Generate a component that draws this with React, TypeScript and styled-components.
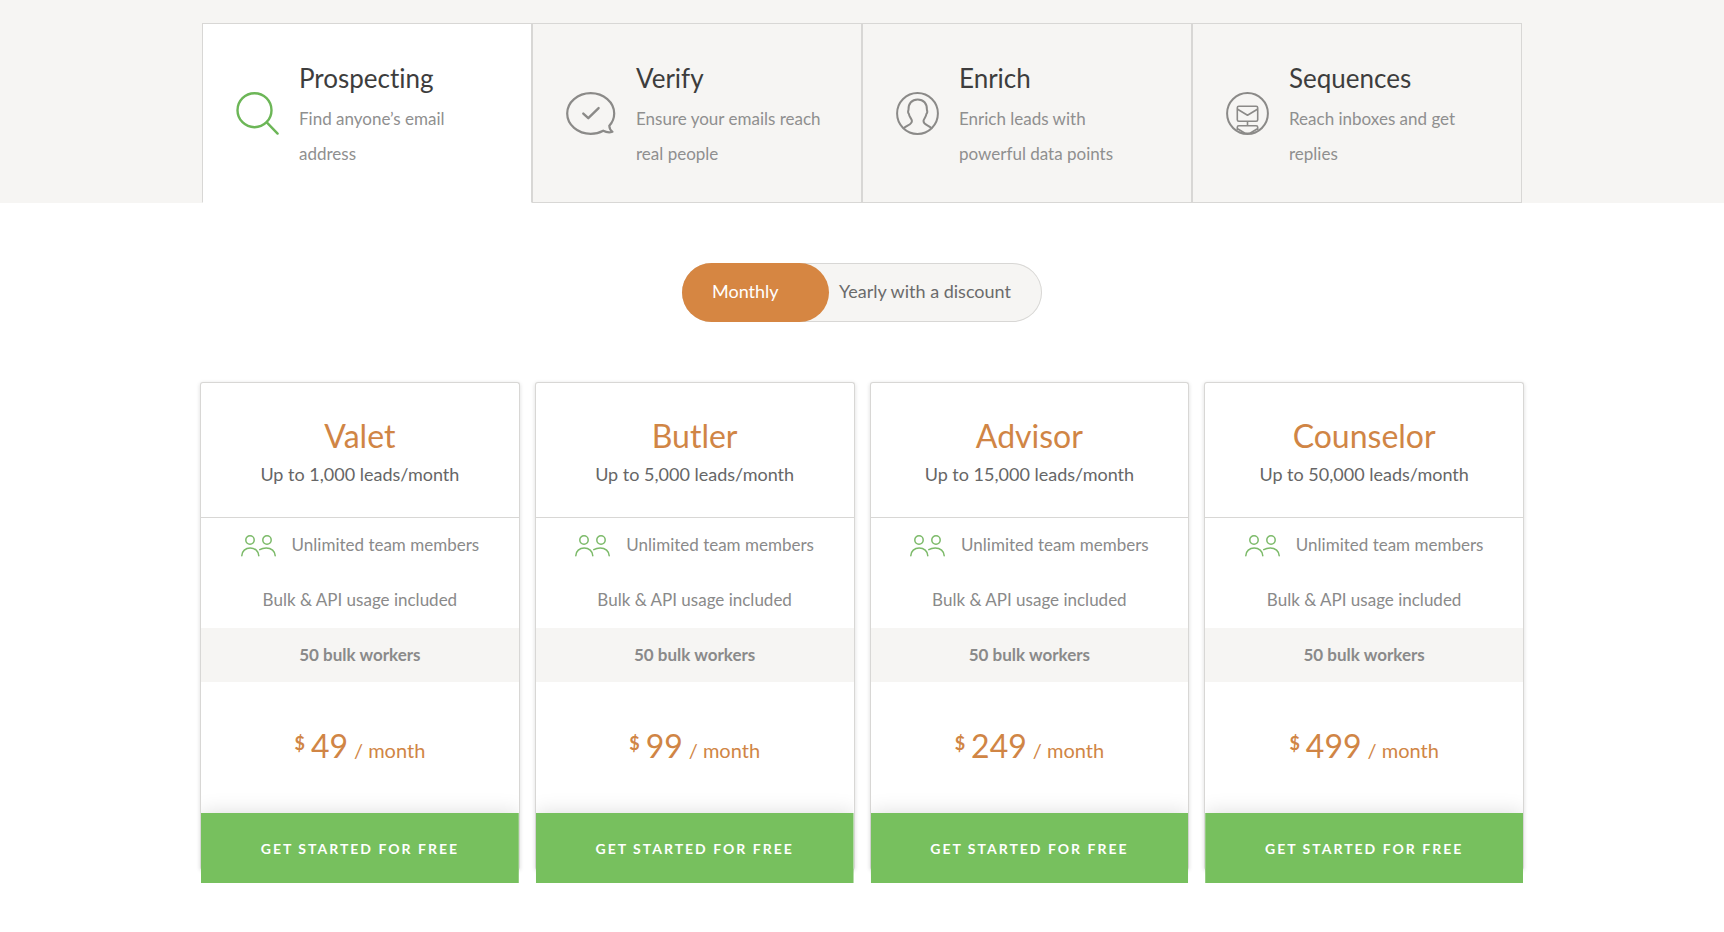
import React, { useState } from "react";
import styled, { createGlobalStyle } from "styled-components";

const GlobalStyle = createGlobalStyle`
  *, *::before, *::after { box-sizing: border-box; }
  body {
    margin: 0;
    background: #fff;
    color: #8a8a8a;
    font-family: Lato, "Liberation Sans", sans-serif;
    font-size: 17px;
    font-variant-ligatures: none;
  }
  button, input { font: inherit; font-variant-ligatures: inherit; }
`;

const TabBand = styled.header`
  padding: 23px 24px 0;
  background: #f6f5f3;
`;

const Tabs = styled.div`
  display: grid;
  grid-template-columns: repeat(4, minmax(0, 1fr));
  max-width: 1320px;
  margin: 0 auto;
`;

const Tab = styled.button<{ $active: boolean }>`
  display: flex;
  align-items: center;
  gap: 20px;
  min-height: 180px;
  padding: 30px 38px 30px 33px;
  border: 1px solid #d8d7d5;
  border-bottom-color: ${(p) => (p.$active ? "#fff" : "#d8d7d5")};
  background: ${(p) => (p.$active ? "#fff" : "#f6f5f3")};
  color: ${(p) => (p.$active ? "#6cb657" : "#8b8a88")};
  text-align: left;
  cursor: pointer;

  svg { flex: none; }
`;

const TabText = styled.span`
  display: block;
`;

const TabTitle = styled.span`
  display: block;
  color: #3d3d3d;
  font-size: 26px;
  line-height: 46px;
`;

const TabNote = styled.span`
  display: block;
  color: #8f8f8f;
  line-height: 35px;
`;

const Main = styled.main`
  display: flex;
  flex-direction: column;
  align-items: center;
  padding: 60px 24px 62px;
`;

const Toggle = styled.div`
  display: flex;
  width: 360px;
  height: 59px;
  border-radius: 30px;
  background: #f6f5f3;
  box-shadow: inset 0 0 0 1px #d8d7d5;
`;

const ToggleOption = styled.label<{ $wide?: boolean }>`
  display: flex;
  align-items: center;
  flex: ${(p) => (p.$wide ? "1" : "0 0 147px")};
  padding: 0 0 4px ${(p) => (p.$wide ? "10px" : "30px")};
  border-radius: 30px;
  color: #6b6b6b;
  font-size: 18px;
  white-space: nowrap;
  cursor: pointer;

  &:has(input:checked) {
    background: #d68642;
    color: #fff;
  }
`;

const ToggleInput = styled.input`
  appearance: none;
  width: 0;
  height: 0;
  margin: 0;
`;

const Plans = styled.section`
  display: grid;
  grid-template-columns: repeat(4, minmax(0, 1fr));
  gap: 15px;
  width: 100%;
  max-width: 1324px;
  margin-top: 60px;
`;

const Card = styled.article`
  display: flex;
  flex-direction: column;
  border: 1px solid #d8d7d5;
  border-bottom: 0;
  border-radius: 3px;
  background: #fff;
  box-shadow: 0 1px 4px rgba(0, 0, 0, 0.14);
  text-align: center;
`;

const CardHead = styled.div`
  height: 135px;
  padding-top: 32px;
  border-bottom: 1px solid #d8d7d5;
`;

const PlanName = styled.h2`
  margin: 0;
  color: #d08545;
  font-size: 32px;
  font-weight: 400;
  line-height: 42px;
`;

const PlanLeads = styled.p`
  margin: 0;
  color: #666;
  font-size: 18px;
  line-height: 34px;
`;

const Features = styled.ul`
  margin: 0;
  padding: 0;
  list-style: none;
`;

const Feature = styled.li<{ $strong?: boolean }>`
  display: flex;
  align-items: center;
  justify-content: center;
  gap: 16px;
  height: ${(p) => (p.$strong ? "54px" : "55px")};
  padding-bottom: 2px;
  background: ${(p) => (p.$strong ? "#f6f5f3" : "transparent")};
  font-weight: ${(p) => (p.$strong ? 700 : 400)};

  svg { flex: none; margin-top: 2px; }
`;

const Price = styled.p`
  display: flex;
  align-items: baseline;
  justify-content: center;
  gap: 6px;
  height: 131px;
  margin: 0;
  color: #d08545;
  font-size: 20px;
  line-height: 128px;
`;

const Currency = styled.sup`
  align-self: center;
  padding-bottom: 10px;
  font-size: 18px;
  font-weight: 700;
  line-height: 1;
`;

const Amount = styled.span`
  font-size: 32px;
`;

const StartButton = styled.button`
  height: 70px;
  margin-bottom: -13px;
  border: 0;
  background: #77c05e;
  box-shadow: 0 0 20px rgba(0, 0, 0, 0.14);
  clip-path: inset(-30px 0 0 0);
  color: #fff;
  font-size: 14px;
  font-weight: 700;
  letter-spacing: 2px;
  text-transform: uppercase;
  cursor: pointer;
`;

const SearchIcon = () => (
  <svg width="43" height="43" viewBox="0 0 43 43" fill="none" stroke="currentColor" strokeWidth="2.4" strokeLinecap="round" aria-hidden="true">
    <circle cx="18.5" cy="18.2" r="17" />
    <path d="M31 30.6 41.6 41.6" />
  </svg>
);

const VerifyIcon = () => (
  <svg width="50" height="43" viewBox="0 0 50 43" fill="none" stroke="currentColor" strokeWidth="2.2" strokeLinecap="round" strokeLinejoin="round" aria-hidden="true">
    <path d="M43.3 33.8C46.5 30.3 48.2 26 48.2 21.5 48.2 10.2 37.7 1.2 24.7 1.2S1.2 10.2 1.2 21.5 11.7 41.8 24.7 41.8C29.3 41.8 33.6 40.7 37.2 38.7 40 40.2 43.3 40.7 46.5 39.8 44.7 38.6 43.4 36.3 43.3 33.8Z" />
    <path d="M17.3 21.6 22.3 26.2 32.6 16.1" strokeWidth="2.4" />
  </svg>
);

const EnrichIcon = () => (
  <svg width="43" height="43" viewBox="0 0 43 43" fill="none" stroke="currentColor" strokeWidth="2" strokeLinejoin="round" aria-hidden="true">
    <circle cx="21.5" cy="21.5" r="20.4" />
    <path d="M7.5 36.2C12 32.6 16.2 32.4 15.9 28.8 15.7 26.7 13.3 25.3 12.8 21.7 11.5 20.6 12.1 18.8 12.5 17.6 12.3 11.6 15.8 7.4 21.7 7.4S31.1 11.6 30.9 17.6C31.3 18.8 31.8 20.6 30.5 21.7 30 25.3 27.7 26.7 27.5 28.8 27.2 32.4 31.2 32.6 35.7 36.2" />
  </svg>
);

const SequencesIcon = () => (
  <svg width="43" height="43" viewBox="0 0 43 43" fill="none" stroke="currentColor" strokeWidth="1.6" strokeLinejoin="round" aria-hidden="true">
    <circle cx="21.5" cy="21.5" r="20.4" strokeWidth="2" />
    <rect x="11.3" y="14.3" width="20.4" height="14.9" rx="1.5" />
    <path d="M11.6 17.3 21.5 23.3 31.4 17.3M21.5 29.2V33.8M11.3 38V35.3Q11.3 33.8 12.8 33.8H30.2Q31.7 33.8 31.7 35.3V38M11.6 36.8 19 41.2H24L31.4 36.8" />
  </svg>
);

const TeamIcon = () => (
  <svg width="35" height="22" viewBox="0 0 35 22" fill="none" stroke="#7cba69" strokeWidth="1.5" strokeLinecap="round" aria-hidden="true">
    <circle cx="9" cy="5" r="4.2" />
    <circle cx="26" cy="5" r="4.2" />
    <path d="M.8 20.8C.8 16.2 4.6 12.9 9.2 12.9S17.8 16.2 17.8 20.8M18.8 14.7C20.6 13.5 23 12.9 25.2 12.9 30.2 12.9 34.2 16.2 34.2 20.8" />
  </svg>
);

const products = [
  { title: "Prospecting", note: "Find anyone’s email address", Icon: SearchIcon },
  { title: "Verify", note: "Ensure your emails reach real people", Icon: VerifyIcon },
  { title: "Enrich", note: "Enrich leads with powerful data points", Icon: EnrichIcon },
  { title: "Sequences", note: "Reach inboxes and get replies", Icon: SequencesIcon },
];

const plans = [
  { name: "Valet", leads: "1,000", price: 49 },
  { name: "Butler", leads: "5,000", price: 99 },
  { name: "Advisor", leads: "15,000", price: 249 },
  { name: "Counselor", leads: "50,000", price: 499 },
];

export default function App() {
  const [tab, setTab] = useState(0);
  const [period, setPeriod] = useState("monthly");

  return (
    <>
      <GlobalStyle />
      <TabBand>
        <Tabs role="tablist">
          {products.map(({ title, note, Icon }, i) => (
            <Tab key={title} type="button" role="tab" aria-selected={tab === i} $active={tab === i} onClick={() => setTab(i)}>
              <Icon />
              <TabText>
                <TabTitle>{title}</TabTitle>
                <TabNote>{note}</TabNote>
              </TabText>
            </Tab>
          ))}
        </Tabs>
      </TabBand>
      <Main>
        <Toggle role="radiogroup" aria-label="Billing period">
          <ToggleOption>
            <ToggleInput type="radio" name="period" checked={period === "monthly"} onChange={() => setPeriod("monthly")} />
            Monthly
          </ToggleOption>
          <ToggleOption $wide>
            <ToggleInput type="radio" name="period" checked={period === "yearly"} onChange={() => setPeriod("yearly")} />
            Yearly with a discount
          </ToggleOption>
        </Toggle>
        <Plans>
          {plans.map((plan) => (
            <Card key={plan.name}>
              <CardHead>
                <PlanName>{plan.name}</PlanName>
                <PlanLeads>Up to {plan.leads} leads/month</PlanLeads>
              </CardHead>
              <Features>
                <Feature>
                  <TeamIcon />
                  Unlimited team members
                </Feature>
                <Feature>Bulk &amp; API usage included</Feature>
                <Feature $strong>50 bulk workers</Feature>
              </Features>
              <Price>
                <Currency>$</Currency>
                <Amount>{plan.price}</Amount>
                <span>/ month</span>
              </Price>
              <StartButton type="button">Get started for free</StartButton>
            </Card>
          ))}
        </Plans>
      </Main>
    </>
  );
}
